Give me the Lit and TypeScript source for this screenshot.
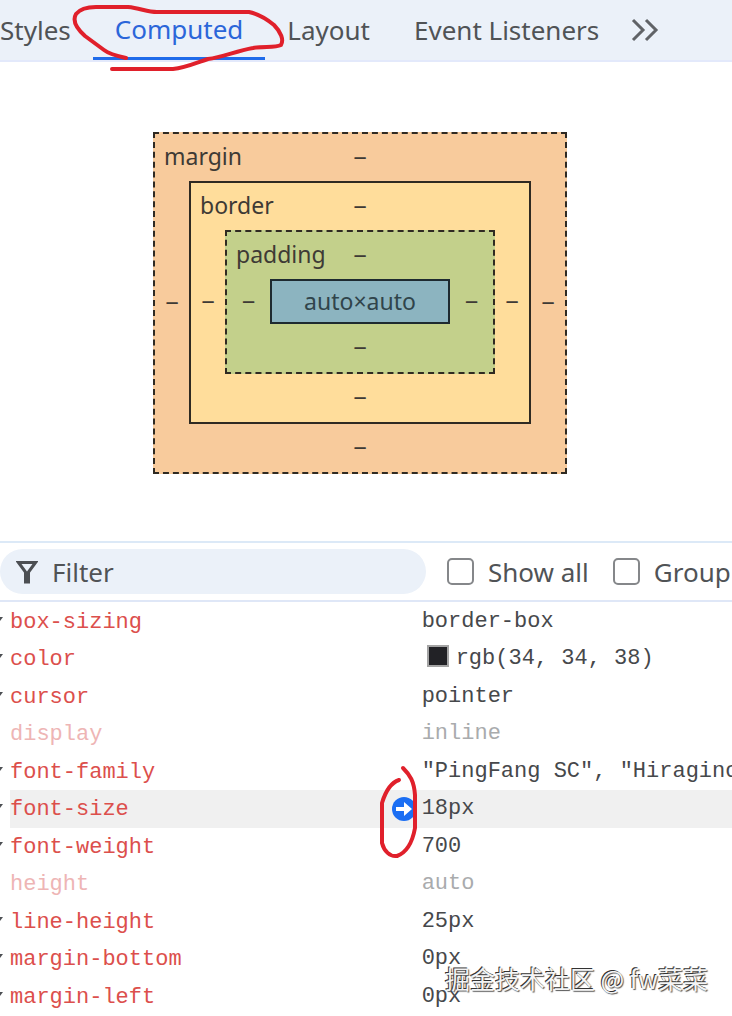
import { LitElement, html, css, svg, nothing } from "lit";
import { customElement, property } from "lit/decorators.js";
import { classMap } from "lit/directives/class-map.js";

interface ComputedRow {
  name: string;
  value: string;
  inherited?: boolean;
  hovered?: boolean;
  swatch?: boolean;
}

const ROWS: ComputedRow[] = [
  { name: "box-sizing", value: "border-box" },
  { name: "color", value: "rgb(34, 34, 38)", swatch: true },
  { name: "cursor", value: "pointer" },
  { name: "display", value: "inline", inherited: true },
  { name: "font-family", value: '"PingFang SC", "Hiragino Sans GB"' },
  { name: "font-size", value: "18px", hovered: true },
  { name: "font-weight", value: "700" },
  { name: "height", value: "auto", inherited: true },
  { name: "line-height", value: "25px" },
  { name: "margin-bottom", value: "0px" },
  { name: "margin-left", value: "0px" },
];

@customElement("panel-tabs")
export class PanelTabs extends LitElement {
  static styles = css`
    :host { display: block; }
    .bar {
      display: flex;
      height: 60px;
      background: #ebf1f9;
      border-bottom: 2px solid #e3e9fb;
      overflow: hidden;
    }
    button {
      flex: none;
      border: 0;
      padding: 0 22px;
      background: none;
      color: #505356;
      font: 26px/58px "Noto Sans", sans-serif;
      white-space: nowrap;
    }
    .first { padding-left: 0; }
    .active { color: #2b66d9; border-bottom: 3px solid #1f6bea; }
    svg { display: block; }
    .more { padding-left: 10px; }
  `;
  render() {
    return html`<div class="bar" role="tablist">
      <button class="first" role="tab">Styles</button>
      <button class="active" role="tab" aria-selected="true">Computed</button>
      <button role="tab">Layout</button>
      <button role="tab">Event Listeners</button>
      <button class="more" aria-label="More tabs">
        <svg width="28" height="24" viewBox="0 0 28 24" fill="none" stroke="#606367" stroke-width="3">
          <path d="M2 2l10 10L2 22M15 2l10 10-10 10" />
        </svg>
      </button>
    </div>`;
  }
}

@customElement("box-model")
export class BoxModel extends LitElement {
  static styles = css`
    :host {
      display: flex;
      justify-content: center;
      padding: 70px 12px 67px 0;
      font: 23px/30px "Noto Sans", sans-serif;
      color: #3e3a35;
    }
    .box {
      display: grid;
      grid-template: 47px auto 48px / 34px auto 34px;
      align-items: center;
      justify-items: center;
      border: 2px solid #2f2a22;
    }
    .margin { background: #f8cb9c; border-style: dashed; }
    .border { background: #ffdd9b; }
    .padding { background: #c3d08b; border-style: dashed; grid-template-columns: 43px auto 43px; }
    .content {
      box-sizing: border-box;
      width: 180px;
      height: 45px;
      border: 2px solid #1e2a30;
      background: #8cb4c0;
      color: #30444b;
      text-align: center;
      line-height: 41px;
    }
    .label { grid-area: 1 / 1 / 2 / 4; justify-self: start; padding: 0 0 4px 9px; }
    .top { grid-area: 1 / 1 / 2 / 4; }
    .left { grid-area: 2 / 1; }
    .inner { grid-area: 2 / 2; }
    .right { grid-area: 2 / 3; }
    .bottom { grid-area: 3 / 1 / 4 / 4; }
  `;
  private ring(name: string, inner: unknown) {
    return html`<div class="box inner ${name}">
      <span class="label">${name}</span>
      <span class="top">‒</span>
      <span class="left">‒</span>
      ${inner}
      <span class="right">‒</span>
      <span class="bottom">‒</span>
    </div>`;
  }
  render() {
    const content = html`<div class="content inner">auto×auto</div>`;
    return this.ring("margin", this.ring("border", this.ring("padding", content)));
  }
}

@customElement("filter-bar")
export class FilterBar extends LitElement {
  static styles = css`
    :host {
      display: flex;
      align-items: center;
      height: 57px;
      border-top: 2px solid #dce9f7;
      border-bottom: 2px solid #dfe7f7;
      font: 26px/36px "Noto Sans", sans-serif;
      color: #505356;
      overflow: hidden;
      white-space: nowrap;
    }
    .filter {
      box-sizing: border-box;
      flex: 0 0 56%;
      display: flex;
      align-items: center;
      gap: 14px;
      height: 45px;
      padding-left: 16px;
      border-radius: 23px;
      background: #ebf1f9;
      margin-right: 21px;
    }
    .filter svg { flex: none; }
    .text {
      flex: 1;
      min-width: 0;
      border: 0;
      padding: 0;
      outline: 0;
      background: none;
      font: inherit;
      color: inherit;
    }
    .text::placeholder { color: #505356; opacity: 1; }
    .check { display: flex; flex: none; align-items: center; gap: 14px; margin-right: 24px; }
    .tick {
      appearance: none;
      box-sizing: border-box;
      width: 27px;
      height: 27px;
      margin: 0;
      border: 2px solid #85878a;
      border-radius: 5px;
      background: #fff;
    }
  `;
  render() {
    return html`
      <label class="filter">
        <svg width="22" height="24" viewBox="0 0 22 24" fill="none" stroke="#4c4f53" stroke-width="3">
          <path d="M2.500 2.500H19.500L12.500 12V22H9.500V12Z" />
        </svg>
        <input class="text" type="text" placeholder="Filter" aria-label="Filter" />
      </label>
      <label class="check"><input class="tick" type="checkbox" />Show all</label>
      <label class="check"><input class="tick" type="checkbox" />Group</label>
    `;
  }
}

@customElement("computed-list")
export class ComputedList extends LitElement {
  @property({ attribute: false }) rows: ComputedRow[] = [];
  static styles = css`
    :host { display: block; padding-top: 1px; }
    table {
      width: 100%;
      table-layout: fixed;
      border-collapse: collapse;
      font: 22px/34px "Liberation Mono", monospace;
      color: #46484b;
    }
    .gutter { width: 10px; }
    .name { width: 52%; }
    .jump { width: 31px; }
    tr { height: 37px; }
    tr:nth-child(even) { height: 38px; }
    th, td {
      padding: 0;
      font-weight: 400;
      text-align: left;
      white-space: pre;
      overflow: hidden;
    }
    th { color: #dc4f4c; padding-top: 2px; }
    svg { display: block; }
    .hovered th, .hovered .cell { background: #f0f0f0; }
    .inherited th { color: #eeb5b5; }
    .inherited .cell { color: #a9abad; }
    button { display: block; padding: 0; border: 0; background: none; }
    .swatch {
      display: inline-block;
      box-sizing: border-box;
      width: 22px;
      height: 22px;
      margin: 0 7px 0 5px;
      border: 2px solid #a4a4a4;
      background: #222226;
      vertical-align: -3px;
    }
  `;
  private arrow() {
    return svg`<svg width="26" height="26" viewBox="0 0 26 26">
      <circle cx="13" cy="13" r="12" fill="#1b6ef3" />
      <path d="M5 11h8V6l8 7-8 7v-5H5z" fill="#fff" />
    </svg>`;
  }
  render() {
    return html`<table>
      <colgroup><col class="gutter" /><col class="name" /><col class="jump" /><col /></colgroup>
      <tbody>
        ${this.rows.map(
          (r) => html`<tr class=${classMap({ hovered: !!r.hovered, inherited: !!r.inherited })}>
            <td>${r.inherited ? nothing : html`<svg width="4" height="12" viewBox="0 0 4 12"><path d="M0 1h3L0 5z" fill="#4c4f53" /></svg>`}</td>
            <th scope="row">${r.name}</th>
            <td class="cell">${r.hovered ? html`<button aria-label="Go to declaration">${this.arrow()}</button>` : nothing}</td>
            <td class="cell">${r.swatch ? html`<span class="swatch"></span>` : nothing}${r.value}</td>
          </tr>`
        )}
      </tbody>
    </table>`;
  }
}

@customElement("app-root")
export class AppRoot extends LitElement {
  static styles = css`
    :host {
      display: block;
      position: relative;
      min-height: 100vh;
      background: #fff;
      overflow: hidden;
    }
    .split { height: 0; }
    .ink {
      position: absolute;
      top: 0;
      left: 0;
      pointer-events: none;
    }
    .mark {
      position: absolute;
      right: 24px;
      bottom: 20px;
      font: 25px/36px "Noto Sans CJK SC", sans-serif;
      color: #f4f4f4;
      text-shadow: -1px -1px 0 #333, 1px 1px 1px #555;
      white-space: nowrap;
    }
  `;
  render() {
    return html`
      <panel-tabs></panel-tabs>
      <box-model></box-model>
      <filter-bar></filter-bar>
      <computed-list .rows=${ROWS}></computed-list>
      <svg class="ink" width="732" height="1016" viewBox="0 0 732 1016" fill="none" stroke="#e0202b" stroke-width="4" stroke-linecap="round" stroke-linejoin="round" aria-hidden="true">
        <path d="M126 58C117 56 109 54 104 50L85 36C76 28 72 21 76 14C80 9 88 7 96 7H128C140 8 147 12 157 12H249C259 14 268 20 274 25C281 32 284 40 281 45C275 48 263 46 253 48C236 51 223 57 208 59C196 63 185 68 173 69H112" />
        <path d="M399 780C390 783 385 793 382 803V843C384 851 390 857 397 856C408 852 413 839 415 828V795C414 781 410 775 403 768" />
      </svg>
      <div class="mark">掘金技术社区 @ fw菜菜</div>
    `;
  }
}
